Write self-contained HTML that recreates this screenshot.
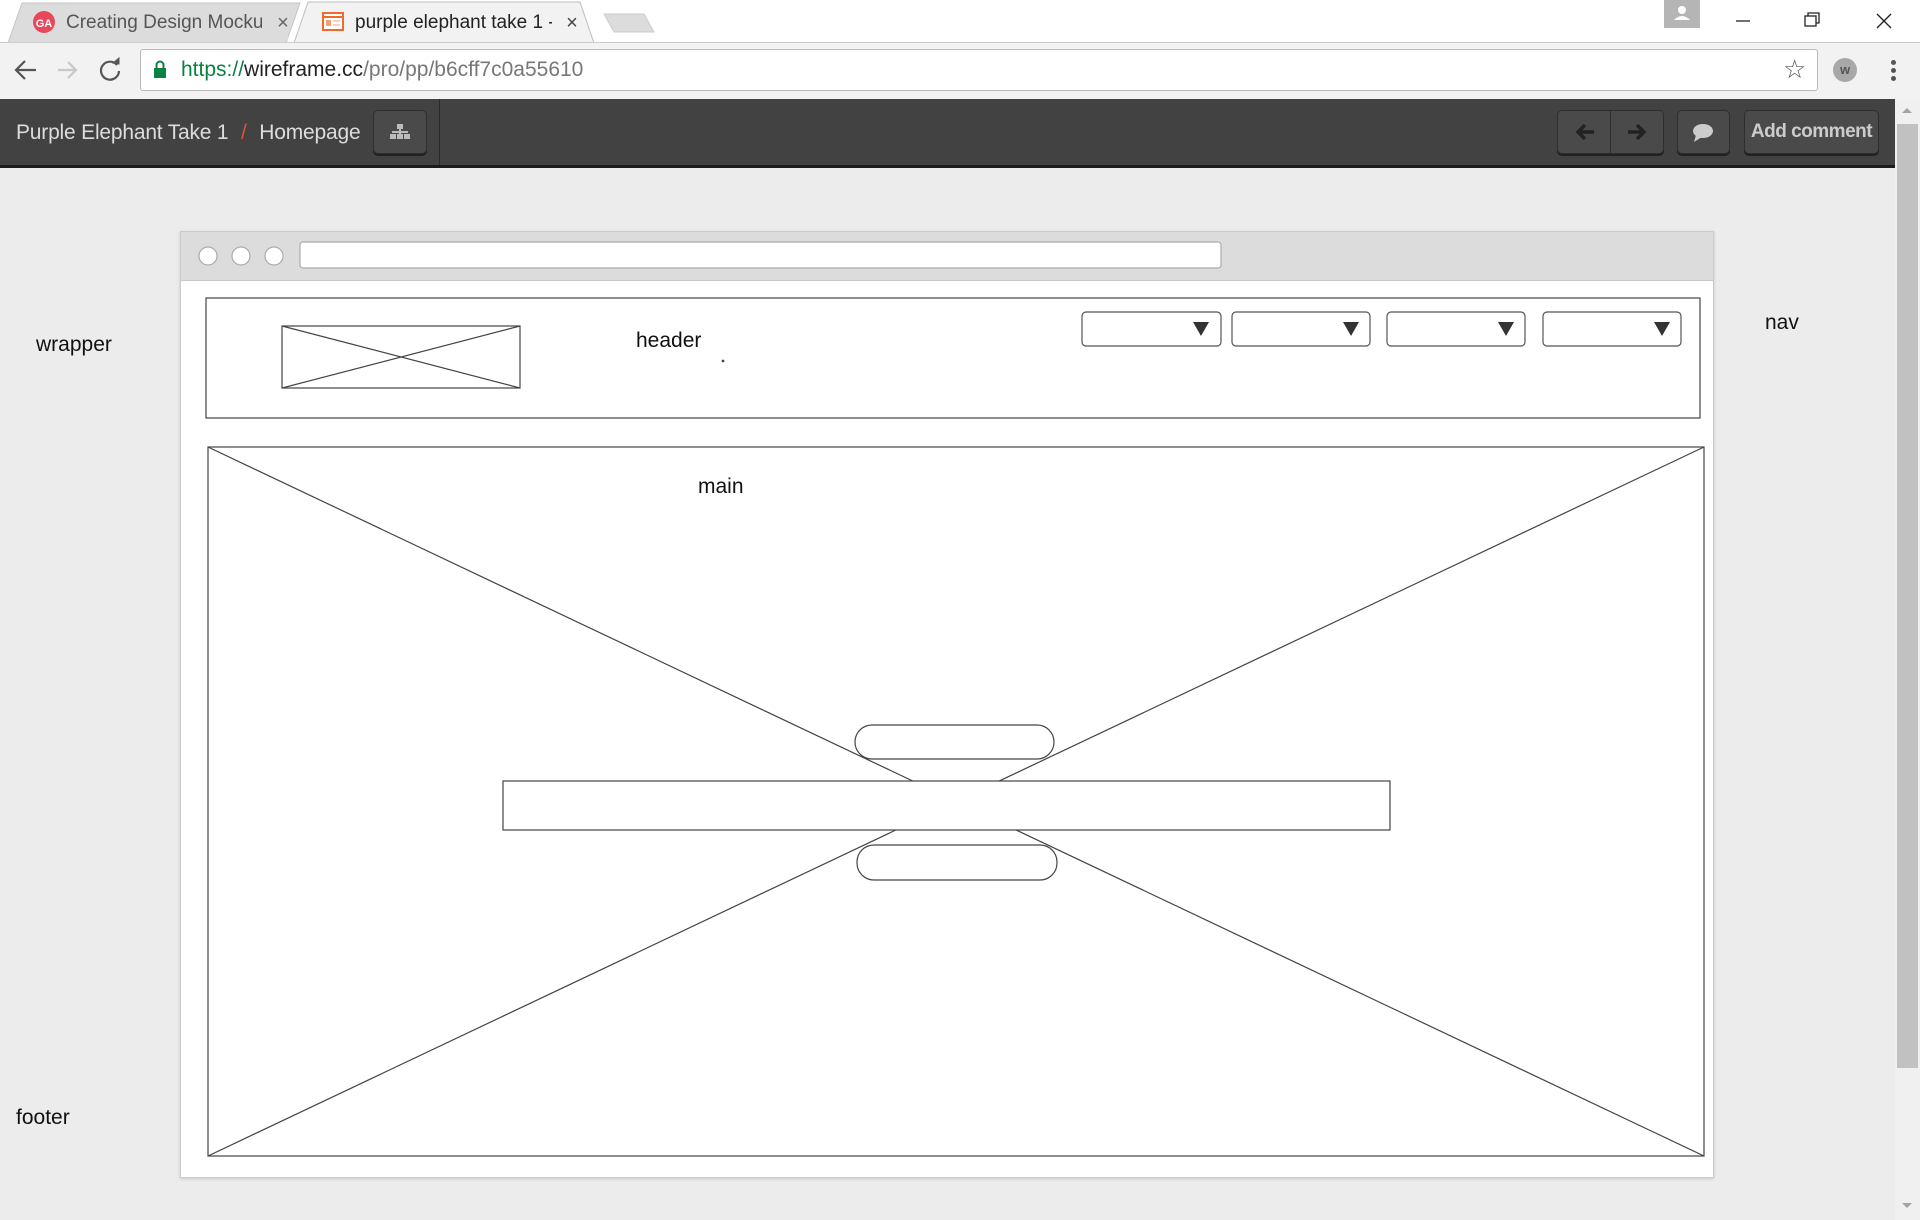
<!DOCTYPE html>
<html><head><meta charset="utf-8"><style>
body{margin:0;width:1920px;height:1220px;overflow:hidden;background:#ececec;font-family:"Liberation Sans",sans-serif;position:relative}
.a{position:absolute}
.btn{position:absolute;top:110px;height:44px;background:#4a4a4a;border:1px solid #2e2e2e;border-radius:5px;box-shadow:0 2px 0 #222;box-sizing:border-box;color:#ccc}
.lb{font-size:21px;color:#111}
</style></head><body>
<div class="a" style="left:0;top:0;width:1920px;height:43px;background:#fff"></div>
<svg class="a" style="left:0;top:0" width="700" height="44">
<path d="M8,43 L22,3 L300,3 L286,43 Z" fill="#dcdcdc" stroke="#c4c4c4"/>
<path d="M294,43 L308,2 L580,2 L594,43" fill="#f2f2f2" stroke="#bdbdbd"/>
<path d="M604,14 L644,14 L654,32 L614,32 Z" fill="#dcdcdc" stroke="#ccc"/>
<circle cx="44" cy="22" r="11" fill="#e8475b"/>
<text x="44" y="27" font-size="11" fill="#fff" text-anchor="middle" font-family="Liberation Sans" font-weight="bold">GA</text>
<rect x="323" y="13" width="20" height="17" fill="#fff" stroke="#f06a2c" stroke-width="2"/>
<line x1="323" y1="17" x2="343" y2="17" stroke="#f06a2c" stroke-width="2"/>
<rect x="326" y="20" width="5" height="6" fill="#f8a070"/><line x1="333" y1="21" x2="340" y2="21" stroke="#f8a070"/><line x1="333" y1="25" x2="340" y2="25" stroke="#f8a070"/>
<text x="66" y="28" font-size="19" fill="#555">Creating Design Mockup</text>
<rect x="262" y="5" width="26" height="36" fill="#dcdcdc"/>
<text x="355" y="28" font-size="19" fill="#222">purple elephant take 1 -</text>
<rect x="552" y="5" width="18" height="36" fill="#f2f2f2"/>
<text x="283" y="29" font-size="20" fill="#666" text-anchor="middle">×</text>
<text x="572" y="29" font-size="20" fill="#444" text-anchor="middle">×</text>
</svg>
<div class="a" style="left:1664px;top:0;width:36px;height:28px;background:#b5b5b5"></div>
<svg class="a" style="left:1664px;top:0" width="36" height="28"><circle cx="18" cy="10" r="4" fill="#fff"/><path d="M10,20 Q18,12 26,20 Z" fill="#fff"/></svg>
<svg class="a" style="left:1720px;top:0" width="200" height="43" stroke="#222" fill="none" stroke-width="1.3">
<line x1="16" y1="21" x2="30" y2="21"/><rect x="85" y="16" width="11" height="10"/><path d="M88,16 V13 H99 V23 H96"/><line x1="157" y1="14" x2="171" y2="28"/><line x1="171" y1="14" x2="157" y2="28"/></svg>
<div class="a" style="left:0;top:42px;width:1920px;height:57px;background:#f2f2f2;border-top:1px solid #ccc;box-sizing:border-box"></div>
<svg class="a" style="left:0;top:43px" width="140" height="56" fill="none" stroke-width="2.2">
<path d="M36,27 H16 M25,18 L16,27 L25,36" stroke="#555"/><path d="M58,27 H76 M68,19 L76,27 L68,35" stroke="#c8c8c8"/>
<path d="M117,22 A9,9 0 1 0 119,28" stroke="#555"/><path d="M113,20 L119,21 L119,15 Z" fill="#555" stroke="#555" stroke-width="1"/></svg>
<div class="a" style="left:140px;top:49px;width:1678px;height:42px;background:#fff;border:1px solid #bbb;border-radius:3px;box-sizing:border-box"></div>
<svg class="a" style="left:152px;top:60px" width="16" height="20"><rect x="2" y="8" width="12" height="10" fill="#0b8043"/><path d="M4.5,9 V5 A3.5,3.5 0 0 1 11.5,5 V9" stroke="#0b8043" stroke-width="2" fill="none"/></svg>
<div class="a" style="left:181px;top:58px;font-size:21px;color:#777;white-space:nowrap"><span style="color:#0b8043">https://</span><span style="color:#222">wireframe.cc</span>/pro/pp/b6cff7c0a55610</div>
<div class="a" style="left:1783px;top:54px;font-size:26px;color:#555">☆</div>
<div class="a" style="left:1833px;top:58px;width:24px;height:24px;border-radius:50%;background:#a8a8a8;color:#555;font-size:13px;font-weight:bold;text-align:center;line-height:24px">w</div>
<div class="a" style="left:1891px;top:60px;width:5px;height:5px;border-radius:50%;background:#555;box-shadow:0 8px 0 #555,0 16px 0 #555"></div>
<div class="a" style="left:0;top:99px;width:1895px;height:66px;background:#424242;border-bottom:3px solid #1c1c1c"></div>
<div class="a" style="left:439px;top:99px;width:1px;height:66px;background:#2a2a2a"></div>
<div class="a" style="left:16px;top:121px;font-size:21px;letter-spacing:-0.2px;color:#ddd;white-space:nowrap">Purple Elephant Take 1 <span style="color:#d9533f;margin:0 7px">/</span> Homepage</div>
<div class="btn" style="left:373px;width:54px"><svg width="52" height="42"><g fill="#bbb"><rect x="23" y="13" width="6" height="5"/><rect x="16" y="23" width="6" height="5"/><rect x="23" y="23" width="6" height="5"/><rect x="30" y="23" width="6" height="5"/><rect x="25" y="18" width="2" height="5"/><rect x="18" y="20" width="16" height="2"/></g></svg></div>
<div class="btn" style="left:1557px;width:107px"><div class="a" style="left:52px;top:0;width:1px;height:42px;background:#2e2e2e"></div>
<svg width="105" height="42" stroke="#222" stroke-width="3.5" fill="none"><path d="M36,21 H20 M27,14 L20,21 L27,28"/><path d="M70,21 H86 M79,14 L86,21 L79,28"/></svg></div>
<div class="btn" style="left:1677px;width:53px"><svg width="51" height="42"><ellipse cx="25" cy="20" rx="10" ry="7" fill="#ccc"/><path d="M18,24 L16,31 L24,26 Z" fill="#ccc"/></svg></div>
<div class="btn" style="left:1744px;width:135px;font-size:19px;font-weight:bold;letter-spacing:-0.5px;line-height:42px;text-align:center;color:#ccc">Add comment</div>
<div class="a" style="left:1895px;top:99px;width:25px;height:1121px;background:#f0f0f0"></div>
<div class="a" style="left:1897px;top:124px;width:21px;height:944px;background:#c1c1c1"></div>
<svg class="a" style="left:1895px;top:99px" width="25" height="1121"><path d="M7,14 L12,9 L17,14 Z" fill="#a3a3a3"/><path d="M7,1104 L12,1109 L17,1104 Z" fill="#a3a3a3"/></svg>
<div class="a lb" style="left:36px;top:333px">wrapper</div>
<div class="a lb" style="left:1765px;top:311px">nav</div>
<div class="a lb" style="left:16px;top:1106px">footer</div>
<div class="a" style="left:180px;top:231px;width:1534px;height:947px;background:#fff;border:1px solid #ccc;box-sizing:border-box;box-shadow:0 1px 3px rgba(0,0,0,.15)"></div>
<div class="a" style="left:181px;top:232px;width:1532px;height:48px;background:#dcdcdc;border-bottom:1px solid #c8c8c8"></div>
<svg class="a" style="left:0;top:0" width="1920" height="1220" fill="none" stroke="#444" stroke-width="1.2">
<g fill="#fff" stroke="#aaa"><circle cx="208" cy="256" r="9"/><circle cx="241" cy="256" r="9"/><circle cx="274" cy="256" r="9"/><rect x="300" y="242" width="921" height="26" rx="3"/></g>
<rect x="206" y="298" width="1494" height="120"/>
<rect x="282" y="326" width="238" height="62"/><line x1="282" y1="326" x2="520" y2="388"/><line x1="520" y1="326" x2="282" y2="388"/>
<g fill="#fff" stroke="#555"><rect x="1082" y="312" width="139" height="34" rx="4"/><rect x="1232" y="312" width="138" height="34" rx="4"/><rect x="1387" y="312" width="138" height="34" rx="4"/><rect x="1543" y="312" width="138" height="34" rx="4"/></g>
<g fill="#333" stroke="none"><path d="M1193,322 h16 l-8,14 z"/><path d="M1343,322 h16 l-8,14 z"/><path d="M1498,322 h16 l-8,14 z"/><path d="M1654,322 h16 l-8,14 z"/></g>
<rect x="208" y="447" width="1496" height="709"/>
<line x1="208" y1="447" x2="1704" y2="1156"/><line x1="1704" y1="447" x2="208" y2="1156"/>
<g fill="#fff"><rect x="855" y="725" width="199" height="34" rx="17"/><rect x="503" y="781" width="887" height="49"/><rect x="857" y="845" width="200" height="35" rx="17"/></g>
<circle cx="723" cy="361" r="0.8" fill="#444"/>
</svg>
<div class="a lb" style="left:636px;top:329px">header</div>
<div class="a lb" style="left:698px;top:475px">main</div>
</body></html>
